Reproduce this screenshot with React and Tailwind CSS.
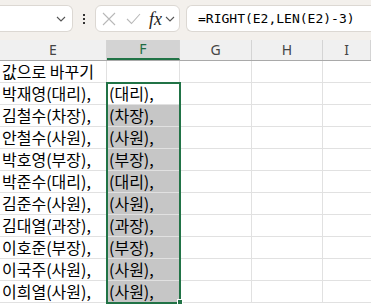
import React from "react";

const rows = [
  ["값으로 바꾸기", ""],
  ["박재영(대리),", "(대리),"],
  ["김철수(차장),", "(차장),"],
  ["안철수(사원),", "(사원),"],
  ["박호영(부장),", "(부장),"],
  ["박준수(대리),", "(대리),"],
  ["김준수(사원),", "(사원),"],
  ["김대열(과장),", "(과장),"],
  ["이호준(부장),", "(부장),"],
  ["이국주(사원),", "(사원),"],
  ["이희열(사원),", "(사원),"],
];

const cols = "grid-cols-[107px_73px_72px_71px_48px]";

const Chevron = ({ className }) => (
  <svg width="10" height="6" viewBox="0 0 10 6" className={className}>
    <path d="M1 1l4 4 4-4" fill="none" stroke="#555" strokeWidth="1.1" />
  </svg>
);

const TopBar = () => (
  <div className="flex h-[40px] items-start bg-[#f3f0ec] pt-[5px]">
    {/* Name box (left edge cut off) */}
    <div className="flex h-[27px] w-[73px] items-center justify-end rounded-r-md border border-l-0 border-[#dcd8d3] bg-white pr-[6px]">
      <Chevron />
    </div>
    {/* dots */}
    <div className="flex h-[27px] w-[22px] flex-col items-center justify-center gap-[2px]">
      <span className="h-[2px] w-[2px] bg-[#333]" />
      <span className="h-[2px] w-[2px] bg-[#333]" />
      <span className="h-[2px] w-[2px] bg-[#333]" />
    </div>
    {/* cancel / enter / fx */}
    <div className="flex h-[27px] w-[85px] items-center rounded-md border border-[#dcd8d3] bg-white pl-[6px]">
      <svg width="14" height="14" viewBox="0 0 14 14" className="mr-[10px]">
        <path d="M1 1l12 12M13 1L1 13" stroke="#b8b8b8" strokeWidth="1.1" />
      </svg>
      <svg width="15" height="12" viewBox="0 0 15 12" className="mr-[8px]">
        <path d="M1 6l4.5 4.5L14 1" fill="none" stroke="#b8b8b8" strokeWidth="1.1" />
      </svg>
      <span className="mr-[3px] text-[18px] leading-none italic text-[#222] [font-family:'Liberation_Serif',serif]">
        fx
      </span>
      <Chevron />
    </div>
    {/* formula box */}
    <div className="ml-[6px] flex h-[27px] flex-1 items-center rounded-l-md border border-r-0 border-[#dcd8d3] bg-white pl-[11px] text-[13px] text-black [font-family:'DejaVu_Sans_Mono',monospace]">
      =RIGHT(E2,LEN(E2)-3)
    </div>
  </div>
);

const Header = () => (
  <div className={`grid ${cols} h-[21px] border-b border-[#a9a9a9] bg-[#f0f0f0] text-[14px] text-[#444] [font-family:'Noto_Sans',sans-serif]`}>
    {["E", "F", "G", "H", "I"].map((c) => (
      <div
        key={c}
        className={`flex items-center justify-center border-r border-[#d4d4d4] leading-none ${
          c === "F" ? "border-b-2 border-b-[#217346] bg-[#d3d3d3] text-[#1e6b41]" : ""
        }`}
      >
        {c}
      </div>
    ))}
  </div>
);

export default function App() {
  return (
    <div className="h-[304px] w-[371px] overflow-hidden bg-white">
      <TopBar />
      <Header />
      <div className="relative">
        {rows.map(([e, f], i) => (
          <div
            key={i}
            className={`grid ${cols} h-[22px] text-[16px] text-black [font-family:'Noto_Sans_CJK_KR',sans-serif]`}
          >
            <div className="flex items-end overflow-visible whitespace-nowrap border-r border-b border-[#e1e1e1] pb-[1px] pl-[2px] leading-[20px]">
              {e}
            </div>
            <div
              className={`flex items-end whitespace-nowrap border-r border-b border-[#e1e1e1] pb-[1px] pl-[2px] leading-[20px] ${
                i >= 2 ? "bg-[#c6c6c6]" : ""
              }`}
            >
              {f}
            </div>
            <div className="border-r border-b border-[#e1e1e1]" />
            <div className="border-r border-b border-[#e1e1e1]" />
            <div className="border-b border-[#e1e1e1]" />
          </div>
        ))}
        {/* selection outline */}
        <div className="pointer-events-none absolute top-[21px] left-[106px] h-[222px] w-[75px] border-2 border-[#217346]" />
        {/* fill handle */}
        <div className="absolute top-[238px] left-[177px] h-[6px] w-[6px] border border-white bg-[#217346]" />
      </div>
    </div>
  );
}
